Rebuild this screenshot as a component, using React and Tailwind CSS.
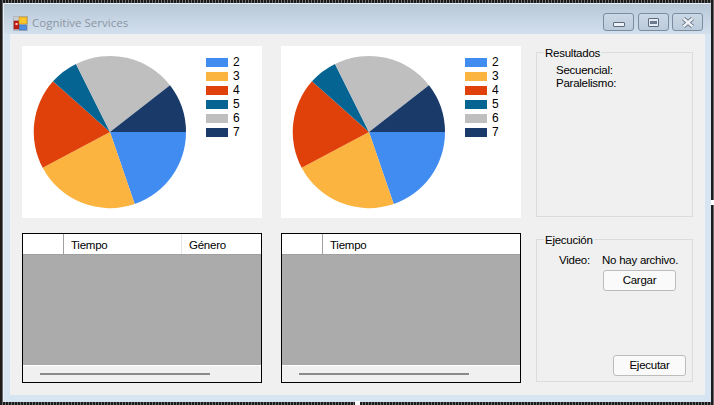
const data = [
  { label: "2", color: "#418cf0", d: "M88 86 L164 86 A76 76 0 0 1 112.7 158 Z" },
  { label: "3", color: "#fcb441", d: "M88 86 L112.7 158 A76 76 0 0 1 20.7 121.7 Z" },
  { label: "4", color: "#e0400a", d: "M88 86 L20.7 121.7 A76 76 0 0 1 31 35.3 Z" },
  { label: "5", color: "#056492", d: "M88 86 L31 35.3 A76 76 0 0 1 54 18 Z" },
  { label: "6", color: "#bfbfbf", d: "M88 86 L54 18 A76 76 0 0 1 148 39.3 Z" },
  { label: "7", color: "#1a3b69", d: "M88 86 L148 39.3 A76 76 0 0 1 164 86 Z" },
];

function Chart() {
  return (
    <div className="flex bg-white h-[172px]">
      <svg width="172" height="172" viewBox="0 0 172 172" className="shrink-0">
        {data.map((s) => (
          <path key={s.label} d={s.d} fill={s.color} />
        ))}
      </svg>
      <div className="ml-[12px] mt-[9px] flex flex-col">
        {data.map((s) => (
          <div key={s.label} className="flex items-center h-[14px] gap-[5px] text-[12px] leading-[14px] text-black">
            <span className="block w-[22px] h-[9px]" style={{ backgroundColor: s.color }} />
            <span>{s.label}</span>
          </div>
        ))}
      </div>
    </div>
  );
}

function Grid({ columns }) {
  return (
    <div className="flex flex-col h-[150px] border border-black bg-[#f0f0f0]">
      <div className="flex h-[21px] shrink-0 bg-white border-b border-[#a0a0a0] text-[11.5px] tracking-[-0.25px] leading-[14px] text-black">
        <div className="w-[41px] shrink-0 border-r border-[#a0a0a0]" />
        {columns.map((c, i) => (
          <div
            key={c}
            className={"pl-[7px] pt-[4px] " + (i === 0 && columns.length > 1 ? "w-[118px] border-r border-[#e5e5e5]" : "flex-1")}
          >
            {c}
          </div>
        ))}
      </div>
      <div className="flex-1 bg-[#ababab]" />
      <div className="h-[17px] shrink-0 border-t border-white flex items-center pl-[17px] pb-[1px]">
        <div className="w-[170px] h-[2px] bg-[#8a8a8a]" />
      </div>
    </div>
  );
}

function WinButton({ children }) {
  return (
    <div className="w-[31px] h-[18px] rounded-[3px] border border-[#7b8ca1] bg-gradient-to-b from-[#cbd8e5] to-[#bccbdb] flex items-center justify-center">
      {children}
    </div>
  );
}

function Group({ title, className, children }) {
  return (
    <fieldset className={"border border-[#dcdcdc] w-[157px] " + className}>
      <legend className="ml-[7px] px-[1px] h-[12px] text-[11.5px] tracking-[-0.25px] leading-[14px] text-black">{title}</legend>
      {children}
    </fieldset>
  );
}

function Btn({ className, children }) {
  return (
    <div className={"w-[73px] h-[21px] rounded-[3px] border border-[#bcbcbc] bg-[#fafafa] flex items-center justify-center text-[11.5px] tracking-[-0.25px] text-black " + className}>
      {children}
    </div>
  );
}

export default function App() {
  return (
    <div
      className="relative w-[714px] h-[405px] p-[3px] bg-[#333] bg-[repeating-linear-gradient(90deg,#1c1c1c_0px,#1c1c1c_2px,#6a6a6a_2px,#6a6a6a_3px)] overflow-hidden"
      style={{ fontFamily: '"Liberation Sans", Arial, sans-serif' }}
    >
      <div className="flex flex-col h-full bg-[#d7e4f2] border-t border-l border-[#e8eef5]">
        <div className="h-[30px] shrink-0 flex items-center pl-[9px] pr-[8px] pt-[9px] pb-[3px] bg-gradient-to-b from-[#b9c8d7] to-[#d2e0ee]">
          <svg width="15" height="15" viewBox="0 0 15 15" className="shrink-0 mt-[2px]">
            <rect x="0.5" y="0.5" width="14" height="14" fill="#c9ced6" stroke="#b3b8c0" />
            <rect x="1" y="5" width="5" height="8" fill="#c41c14" stroke="#8f1a14" strokeWidth="0.6" />
            <rect x="2.5" y="7" width="2" height="2" fill="#f6d0c8" />
            <rect x="6" y="1" width="8" height="7" fill="#fbc52c" stroke="#b98a1c" strokeWidth="0.6" />
            <rect x="6.5" y="9" width="7" height="5" fill="#4f8fe0" stroke="#3468ad" strokeWidth="0.6" />
          </svg>
          <span className="ml-[4px] mt-[2px] text-[11.5px] text-[#8b96a3]" style={{ fontFamily: '"Open Sans", sans-serif' }}>
            Cognitive Services
          </span>
          <div className="ml-auto flex gap-[3.5px]">
            <WinButton>
              <span className="block w-[12px] h-[5px] mt-[5px] rounded-[1px] bg-[#eef2f6] border border-[#5b6a7c]" />
            </WinButton>
            <WinButton>
              <span className="flex items-center justify-center w-[11px] h-[9px] border border-[#5b6a7c] bg-[#e4ebf2] rounded-[1px]">
                <span className="block w-[7px] h-[3px] bg-[#6b7a8c]" />
              </span>
            </WinButton>
            <WinButton>
              <svg width="14" height="11" viewBox="0 0 14 11">
                <path d="M2.5 1.5 L11.5 9.5 M11.5 1.5 L2.5 9.5" stroke="#5b6a7c" strokeWidth="4.2" />
                <path d="M2.5 1.5 L11.5 9.5 M11.5 1.5 L2.5 9.5" stroke="#eef2f6" strokeWidth="2.4" />
              </svg>
            </WinButton>
          </div>
        </div>
        <div className="ml-[6px] mr-[6px] mb-[7px] flex-1 bg-[#f0f0f0] p-[12px] flex">
          <div className="grid grid-cols-[240px_240px] grid-rows-[172px_150px] gap-x-[19px] gap-y-[15px]">
            <Chart />
            <Chart />
            <Grid columns={["Tiempo", "Género"]} />
            <Grid columns={["Tiempo"]} />
          </div>
          <div className="ml-[15px] flex flex-col gap-[16px]">
            <Group title="Resultados" className="h-[171px]">
              <div className="mt-[6px] pl-[19px] text-[11.5px] tracking-[-0.25px] leading-[13px] text-black">
                <div>Secuencial:</div>
                <div>Paralelismo:</div>
              </div>
            </Group>
            <Group title="Ejecución" className="h-[149px]">
              <div className="mt-[8px] flex text-[11.5px] tracking-[-0.25px] leading-[14px] text-black">
                <span className="pl-[22px] w-[65px]">Video:</span>
                <span>No hay archivo.</span>
              </div>
              <Btn className="mt-[3px] ml-[66px]">Cargar</Btn>
              <Btn className="mt-[64px] ml-[76px]">Ejecutar</Btn>
            </Group>
          </div>
        </div>
      </div>
      <div className="absolute left-[355px] bottom-0 w-[5px] h-[4px] bg-white" />
      <div className="absolute right-0 top-[200px] w-[3px] h-[5px] bg-white" />
    </div>
  );
}
